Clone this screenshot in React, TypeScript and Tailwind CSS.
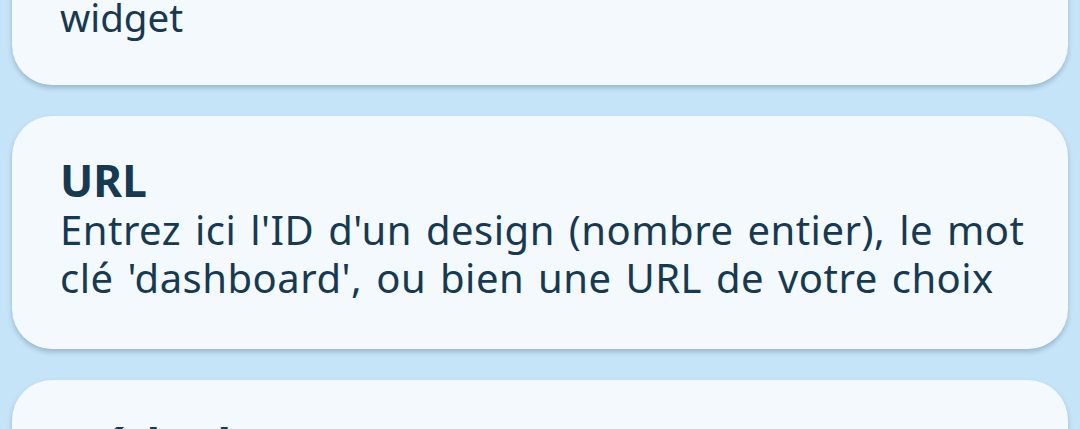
const Card: React.FC<{ title?: string; lines: string[]; className?: string; textClass?: string }> = ({ title, lines, className, textClass }) => {
  return (
    <div className={"rounded-[40px] bg-[#f4f9fe] pl-[48px] pr-[40px] shadow-[0_3px_5px_rgba(40,70,100,0.28)] " + (className ?? "")}>
      {title && <div className="text-[44px] leading-[52px] font-bold text-[#163a51]">{title}</div>}
      {lines.map((l, i) => (
        <div key={i} className={"leading-[48px] text-[#163a51] whitespace-nowrap " + (textClass ?? "text-[40px] tracking-[0.5px] [word-spacing:3px]")}>
          {l}
        </div>
      ))}
    </div>
  )
}

export default function App() {
  return (
    <div className="h-[429px] w-[1080px] overflow-hidden bg-[#c5e4f8]" style={{ fontFamily: '"Noto Sans", "Open Sans", sans-serif' }}>
      <div className="flex flex-col gap-[31px] px-[12px] -mt-[45px]">
        <Card className="pt-[38px] pb-[44px]" textClass="text-[38.5px]" lines={["widget"]} />
        <Card
          className="pt-[38px] pb-[47px]"
          title="URL"
          lines={["Entrez ici l'ID d'un design (nombre entier), le mot", "clé 'dashboard', ou bien une URL de votre choix"]}
        />
        <Card className="pt-[38px] pb-[47px]" title="Méthode" lines={["Choisissez la méthode"]} />
      </div>
    </div>
  )
}
